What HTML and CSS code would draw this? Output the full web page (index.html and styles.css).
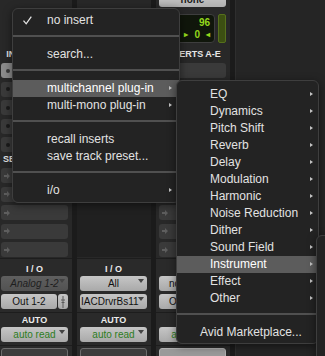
FILE: index.html
```html
<!DOCTYPE html>
<html>
<head>
<meta charset="utf-8">
<link rel="stylesheet" href="styles.css">
</head>
<body>
<div class="mixer">
  <div class="strip">
    <div class="cap"></div>
    <div class="meters"></div>
    <div class="label">INSERTS A-E</div>
    <div class="slots">
      <div class="slot sel"><i class="dot"></i></div>
      <div class="slot"><i class="dot"></i></div>
      <div class="slot"><i class="dot"></i></div>
      <div class="slot"><i class="dot"></i></div>
      <div class="slot"><i class="dot"></i></div>
    </div>
    <div class="label sends-label">SENDS A-E</div>
    <div class="slots">
      <div class="slot"><svg class="arr" viewBox="0 0 6 6"><path d="M0 2h3V0l3 3-3 3V4H0z"/></svg></div>
      <div class="slot"><svg class="arr" viewBox="0 0 6 6"><path d="M0 2h3V0l3 3-3 3V4H0z"/></svg></div>
      <div class="slot"><svg class="arr" viewBox="0 0 6 6"><path d="M0 2h3V0l3 3-3 3V4H0z"/></svg></div>
      <div class="slot"><svg class="arr" viewBox="0 0 6 6"><path d="M0 2h3V0l3 3-3 3V4H0z"/></svg></div>
      <div class="slot"><svg class="arr" viewBox="0 0 6 6"><path d="M0 2h3V0l3 3-3 3V4H0z"/></svg></div>
    </div>
    <div class="sec io">
      <div class="title">I / O</div>
      <div class="btn dark">Analog 1-2<i class="tri"></i></div>
      <div class="btn-row">
        <div class="btn grow">Out 1-2</div>
        <div class="btn mini"><svg viewBox="0 0 6 12"><path d="M3 0v12M1 4h4M1.5 6.5h3" stroke="#5a5a5a" stroke-width="1" fill="none"/></svg></div>
      </div>
    </div>
    <div class="sec auto">
      <div class="title">AUTO</div>
      <div class="btn green">auto read<i class="tri"></i></div>
    </div>
    <div class="sec foot"><div class="btn blank"></div></div>
  </div>

  <div class="strip">
    <div class="cap"></div>
    <div class="meters"></div>
    <div class="label">INSERTS A-E</div>
    <div class="slots">
      <div class="slot"></div><div class="slot"></div><div class="slot"></div><div class="slot"></div><div class="slot"></div>
    </div>
    <div class="label">SENDS A-E</div>
    <div class="slots empty"></div>
    <div class="sec io">
      <div class="title">I / O</div>
      <div class="btn">All<i class="tri"></i></div>
      <div class="btn-row">
        <div class="btn grow tight">IACDrvrBs11<i class="tri"></i></div>
      </div>
    </div>
    <div class="sec auto">
      <div class="title">AUTO</div>
      <div class="btn green">auto read<i class="tri"></i></div>
    </div>
    <div class="sec foot"><div class="btn blank"></div></div>
  </div>

  <div class="strip">
    <div class="cap"><div class="none-btn">none</div></div>
    <div class="meters">
      <div class="lcd">
        <div class="lcd-row">96</div>
        <div class="lcd-row small"><span class="lt">&#9656;</span><span>0</span><span class="rt">&#9666;</span></div>
      </div>
      <div class="meter"></div>
    </div>
    <div class="label">INSERTS A-E</div>
    <div class="slots">
      <div class="slot"></div><div class="slot"></div><div class="slot"></div><div class="slot"></div><div class="slot"></div>
    </div>
    <div class="label">SENDS A-E</div>
    <div class="slots">
      <div class="slot"><svg class="arr" viewBox="0 0 6 6"><path d="M0 2h3V0l3 3-3 3V4H0z"/></svg></div>
      <div class="slot"><svg class="arr" viewBox="0 0 6 6"><path d="M0 2h3V0l3 3-3 3V4H0z"/></svg></div>
      <div class="slot"><svg class="arr" viewBox="0 0 6 6"><path d="M0 2h3V0l3 3-3 3V4H0z"/></svg></div>
      <div class="slot"><svg class="arr" viewBox="0 0 6 6"><path d="M0 2h3V0l3 3-3 3V4H0z"/></svg></div>
      <div class="slot"><svg class="arr" viewBox="0 0 6 6"><path d="M0 2h3V0l3 3-3 3V4H0z"/></svg></div>
    </div>
    <div class="sec io">
      <div class="title">I / O</div>
      <div class="btn left">no input<i class="tri"></i></div>
      <div class="btn-row">
        <div class="btn grow left">Out 3-4</div>
      </div>
    </div>
    <div class="sec auto">
      <div class="title">AUTO</div>
      <div class="btn green">auto read<i class="tri"></i></div>
    </div>
    <div class="sec foot"><div class="btn blank light"></div></div>
  </div>

  <div class="rest"></div>
</div>

<div class="menu main">
  <div class="item"><svg class="check" viewBox="0 0 9 9"><path d="M0.5 4.6L3.2 7.8L8.3 0.6" fill="none" stroke="#e4e4e4" stroke-width="1.3"/></svg>no insert</div>
  <div class="sep"></div>
  <div class="item">search...</div>
  <div class="sep"></div>
  <div class="item hl sub-arrow">multichannel plug-in</div>
  <div class="item sub-arrow">multi-mono plug-in</div>
  <div class="sep"></div>
  <div class="item">recall inserts</div>
  <div class="item">save track preset...</div>
  <div class="sep"></div>
  <div class="item sub-arrow">i/o</div>
</div>

<div class="menu submenu">
  <div class="item sub-arrow">EQ</div>
  <div class="item sub-arrow">Dynamics</div>
  <div class="item sub-arrow">Pitch Shift</div>
  <div class="item sub-arrow">Reverb</div>
  <div class="item sub-arrow">Delay</div>
  <div class="item sub-arrow">Modulation</div>
  <div class="item sub-arrow">Harmonic</div>
  <div class="item sub-arrow">Noise Reduction</div>
  <div class="item sub-arrow">Dither</div>
  <div class="item sub-arrow">Sound Field</div>
  <div class="item hl sub-arrow">Instrument</div>
  <div class="item sub-arrow">Effect</div>
  <div class="item sub-arrow">Other</div>
  <div class="sep"></div>
  <div class="item flush">Avid Marketplace...</div>
</div>

<div class="menu third"></div>
</body>
</html>
```

FILE: styles.css
```css
* { box-sizing: border-box; }
html, body { margin: 0; padding: 0; }
body {
  width: 325px;
  height: 356px;
  overflow: hidden;
  background: #1b1b1b;
  font-family: "Liberation Sans", Arial, sans-serif;
  position: relative;
}

.mixer {
  display: flex;
  gap: 5px;
  margin-left: -2px;
  height: 356px;
  overflow: hidden;
}
.strip {
  width: 74px;
  flex: none;
  background: #282828;
  display: flex;
  flex-direction: column;
  padding: 0 4px 0 3px;
  overflow: hidden;
}
.strip > * { flex-shrink: 0; }
.rest { flex: 1; background: #252525; border-left: 1px solid #2e2e2e; }

.cap { height: 10px; }
.none-btn {
  height: 12px;
  margin-top: -5px;
  background: linear-gradient(#c8c8c8, #b0b0b0);
  border-radius: 0 0 3px 3px;
  color: #1a1a1a;
  font-size: 10px;
  font-weight: bold;
  text-align: center;
  line-height: 9px;
}

.meters { height: 37px; display: flex; padding-top: 4px; }
.lcd {
  width: 54px;
  height: 29px;
  margin-left: 2px;
  background: #10160b;
  border: 1px solid #3e3e3e;
  border-radius: 4px;
  color: #94d81c;
  font-weight: bold;
  font-size: 10px;
  display: flex;
  flex-direction: column;
  padding: 2px 4px 0 0;
}
.lcd-row { text-align: right; height: 12px; line-height: 12px; }
.lcd-row.small { display: flex; justify-content: flex-end; gap: 6px; font-size: 10px; }
.lcd-row .lt, .lcd-row .rt { font-size: 8px; }
.meter {
  width: 8px;
  height: 29px;
  margin-left: 3px;
  background: #3c4f12;
  border: 1px solid #56701c;
  border-radius: 2px;
}

.label {
  height: 14px;
  line-height: 14px;
  text-align: center;
  font-size: 9px;
  font-weight: bold;
  color: #e6e6e6;
  white-space: nowrap;
}
.label.sends-label { text-align: left; padding-left: 2px; line-height: 15px; }

.slots {
  padding-top: 2px;
  height: 91px;
  display: flex;
  flex-direction: column;
  gap: 3.5px;
}
.slots.empty { background: #202020; margin: 0 -4px 0 -3px; }
.slot {
  height: 15px;
  flex-shrink: 0;
  background: #3a3a3a;
  border-radius: 3px;
  display: flex;
  align-items: center;
  padding-left: 3px;
}
.slot.sel { background: #8c8c8c; }
.dot {
  width: 4px;
  height: 4px;
  border-radius: 50%;
  background: #1a1a1a;
  margin-left: 2px;
}
.slot.sel .dot { background: #3a3a3a; }
.arr { width: 6px; height: 6px; fill: #5e5e5e; }

.sec {
  display: flex;
  flex-direction: column;
  border-top: 1px solid #1d1d1d;
  margin: 0 -4px 0 -3px;
  padding: 0 4px 0 3px;
  background: #2a2a2a;
}
.sec.io { margin-top: 1px; padding-top: 3px; padding-bottom: 3px; }
.sec.auto { padding-bottom: 3px; }
.sec.foot { padding-top: 2px; flex: 1; }
.title {
  height: 14px;
  line-height: 14px;
  text-align: center;
  font-size: 9px;
  font-weight: bold;
  color: #ececec;
}
.btn {
  height: 15px;
  flex-shrink: 0;
  border-radius: 3px;
  background: linear-gradient(#c6c6c6, #a9a9a9);
  color: #111;
  font-size: 10px;
  display: flex;
  align-items: center;
  justify-content: center;
  position: relative;
  white-space: nowrap;
  overflow: hidden;
}
.btn.left { justify-content: flex-start; padding-left: 10px; }
.btn.dark { background: linear-gradient(#5f5f5f, #525252); color: #1e1e1e; font-style: italic; }
.btn.green { color: #2d7d1e; }
.btn.tight { justify-content: flex-start; padding-left: 1px; }
.btn.blank { background: #3c3c3c; border: 1px solid #6c6c6c; height: 15px; }
.btn.blank.light { background: #9a9a9a; border-color: #b0b0b0; }
.btn-row { display: flex; gap: 1px; margin-top: 3px; }
.grow { flex: 1; }
.btn.mini { width: 10px; flex: none; }
.btn.mini svg { width: 6px; height: 12px; }
.tri {
  position: absolute;
  right: 3px;
  top: 3px;
  width: 0;
  height: 0;
  border-left: 3.5px solid transparent;
  border-right: 3.5px solid transparent;
  border-top: 4px solid #444;
}

/* menus */
.menu {
  position: absolute;
  background: #232323;
  border: 1px solid #3e3e3e;
  border-radius: 6px;
  box-shadow: 0 2px 8px rgba(0,0,0,0.5);
  color: #e2e2e2;
  font-size: 12px;
}
.menu.main { left: 12px; top: 8px; width: 168px; padding: 3px 0; }
.menu.submenu { left: 176px; top: 80px; width: 143px; padding: 5px 0 2px; }
.menu.third { left: 316px; top: 235px; width: 40px; height: 140px; }
.item {
  height: 17px;
  line-height: 17px;
  padding-left: 34px;
  position: relative;
  white-space: nowrap;
}
.menu.submenu .item { padding-left: 33px; }
.menu.submenu .item.flush { padding-left: 23px; }
.item.hl { background: #5c5c5c; color: #fff; }
.sep { height: 17px; padding-top: 6px; }
.sep::before { content: ""; display: block; height: 2px; background: #505050; }
.check { position: absolute; left: 10px; top: 4px; width: 9px; height: 9px; }
.sub-arrow::after {
  content: "";
  position: absolute;
  right: 7px;
  top: 6px;
  border-top: 2.5px solid transparent;
  border-bottom: 2.5px solid transparent;
  border-left: 3.5px solid #c4c4c4;
}
.menu.submenu .sub-arrow::after { right: 5px; }
```
